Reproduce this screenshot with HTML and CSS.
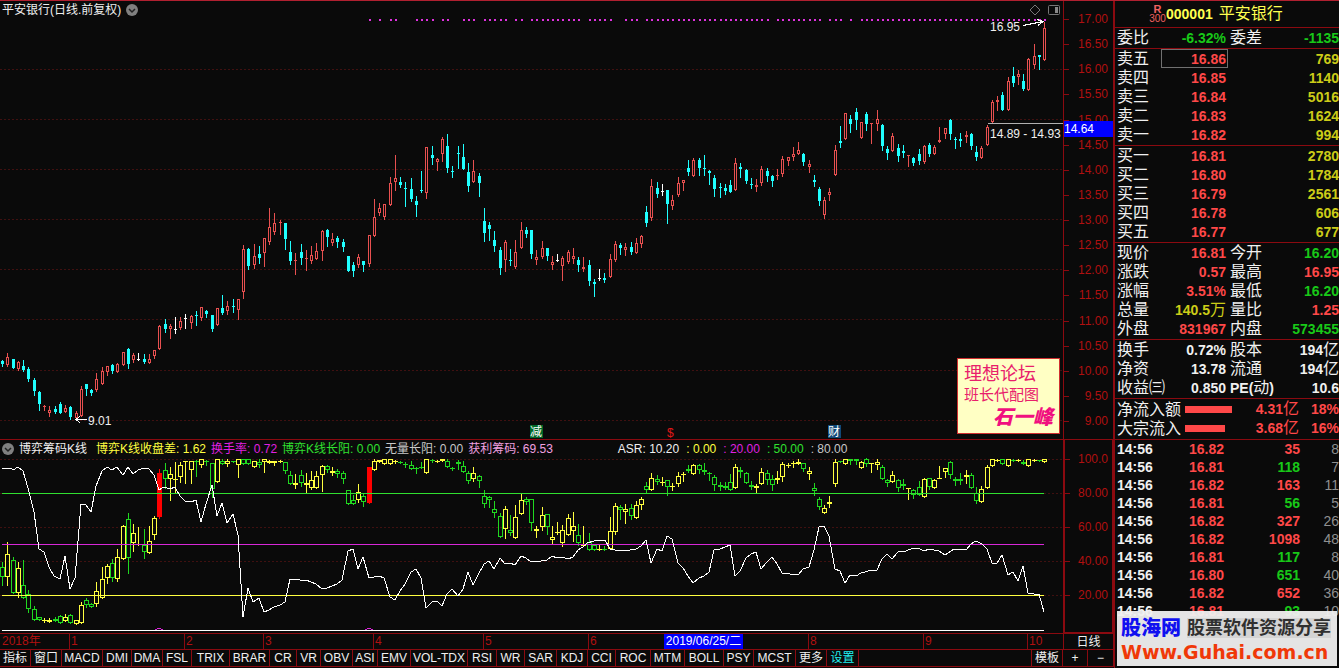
FILE: index.html
```html
<!DOCTYPE html>
<html lang="zh-CN">
<head>
<meta charset="utf-8">
<title>平安银行 000001</title>
<link rel="stylesheet" href="styles.css">
</head>
<body>
<div class="screen">
  <main class="charts">
    <section class="pane price-pane">
      <header class="pane-head">
        <h1 class="pane-title">平安银行(日线.前复权)</h1>
        <button class="icon-btn" aria-label="展开"><svg width="12" height="12" viewBox="0 0 12 12"><circle cx="6" cy="6" r="6" fill="#808080"/><path d="M3 5l3 3 3-3" fill="none" stroke="#222" stroke-width="1.5"/></svg></button>
        <span class="spacer"></span>
        <button class="icon-btn" aria-label="标记"><svg width="12" height="12" viewBox="0 0 12 12"><path d="M6 1l5 5-5 5-5-5z" fill="none" stroke="#777"/></svg></button>
        <button class="icon-btn panel-btn" aria-label="侧栏"><svg width="12" height="12" viewBox="0 0 12 12"><rect x=".5" y="1.5" width="11" height="9" rx="1" fill="none" stroke="#777"/><rect x="7" y="3" width="3" height="6" fill="#888"/></svg></button>
      </header>
      <svg class="plot" id="price-plot" viewBox="0 19 1063 420" preserveAspectRatio="none" role="img" aria-label="日线K线图"></svg>
      <aside class="card">
        <p class="card-forum">理想论坛</p>
        <p class="card-by">班长代配图</p>
        <p class="card-sign">石一峰</p>
      </aside>
    </section>
    <div class="scale price-scale">
      <span>17.00</span><span>16.50</span><span>16.00</span><span>15.50</span><span>15.00</span><span>14.50</span><span>14.00</span><span>13.50</span><span>13.00</span><span>12.50</span><span>12.00</span><span>11.50</span><span>11.00</span><span>10.50</span><span>10.00</span><span>9.50</span><span>9.00</span>
      <b class="cursor-price">14.64</b>
    </div>

    <section class="pane">
      <header class="pane-head indicator-head">
        <button class="icon-btn" aria-label="指标菜单"><svg width="12" height="12" viewBox="0 0 12 12"><circle cx="6" cy="6" r="6" fill="#808080"/><path d="M3 5l3 3 3-3" fill="none" stroke="#222" stroke-width="1.5"/></svg></button>
        <h2 class="pane-title indicator-name">博弈筹码K线</h2>
        <span class="c-yellow">博弈K线收盘差: 1.62</span>
        <span class="c-magenta">换手率: 0.72</span>
        <span class="c-lime">博弈K线长阳: 0.00</span>
        <span class="c-silver">无量长阳: 0.00</span>
        <span class="c-pink">获利筹码: 69.53</span>
        <span class="asr">ASR: 10.20</span>
        <span class="asr-level c-yellow">: 0.00</span>
        <span class="asr-level c-magenta">: 20.00</span>
        <span class="asr-level c-lime">: 50.00</span>
        <span class="asr-level c-silver">: 80.00</span>
      </header>
      <svg class="plot" id="chip-plot" viewBox="0 457 1063 176" preserveAspectRatio="none" role="img" aria-label="博弈筹码K线"></svg>
    </section>
    <div class="scale chip-scale">
      <span>100.0</span><span>80.00</span><span>60.00</span><span>40.00</span><span>20.00</span>
    </div>

    <div class="dates">
      <span>2018年</span><span class="month">1</span><span class="month">2</span><span class="month">3</span><span class="month">4</span><span class="month">5</span><span class="month">6</span><span class="cursor-date">2019/06/25/二</span><span></span><span class="month">8</span><span class="month">9</span><span class="month">10</span>
    </div>
    <button class="period">日线</button>

    <nav class="tabs">
      <button>指标</button><button>窗口</button><button>MACD</button><button>DMI</button><button>DMA</button><button>FSL</button><button>TRIX</button><button>BRAR</button><button>CR</button><button>VR</button><button>OBV</button><button>ASI</button><button>EMV</button><button>VOL-TDX</button><button>RSI</button><button>WR</button><button>SAR</button><button>KDJ</button><button>CCI</button><button>ROC</button><button>MTM</button><button>BOLL</button><button>PSY</button><button>MCST</button><button>更多</button><button class="c-cyan">设置</button><i class="tab-gap"></i><button>模板</button><button>+</button><button>−</button>
    </nav>
  </main>

  <aside class="side">
    <header class="stock">
      <span class="badge"><b>R</b><small>300</small></span>
      <b>000001</b>
      <span class="stock-name">平安银行</span>
    </header>
    <table class="quote">
      <colgroup><col class="w-label"><col class="w-value"><col class="w-label2"><col></colgroup>
      <tbody>
        <tr><th>委比</th><td class="c-green">-6.32%</td><th>委差</th><td class="c-green">-1135</td></tr>
      </tbody>
      <tbody>
        <tr><th>卖五</th><td class="c-red picked">16.86</td><th></th><td class="c-gold">769</td></tr>
        <tr><th>卖四</th><td class="c-red">16.85</td><th></th><td class="c-gold">1140</td></tr>
        <tr><th>卖三</th><td class="c-red">16.84</td><th></th><td class="c-gold">5016</td></tr>
        <tr><th>卖二</th><td class="c-red">16.83</td><th></th><td class="c-gold">1624</td></tr>
        <tr><th>卖一</th><td class="c-red">16.82</td><th></th><td class="c-gold">994</td></tr>
      </tbody>
      <tbody>
        <tr><th>买一</th><td class="c-red">16.81</td><th></th><td class="c-gold">2780</td></tr>
        <tr><th>买二</th><td class="c-red">16.80</td><th></th><td class="c-gold">1784</td></tr>
        <tr><th>买三</th><td class="c-red">16.79</td><th></th><td class="c-gold">2561</td></tr>
        <tr><th>买四</th><td class="c-red">16.78</td><th></th><td class="c-gold">606</td></tr>
        <tr><th>买五</th><td class="c-red">16.77</td><th></th><td class="c-gold">677</td></tr>
      </tbody>
      <tbody>
        <tr><th>现价</th><td class="c-red">16.81</td><th>今开</th><td class="c-green">16.20</td></tr>
        <tr><th>涨跌</th><td class="c-red">0.57</td><th>最高</th><td class="c-red">16.95</td></tr>
        <tr><th>涨幅</th><td class="c-red">3.51%</td><th>最低</th><td class="c-green">16.20</td></tr>
        <tr><th>总量</th><td class="c-gold">140.5<span class="unit">万</span></td><th>量比</th><td class="c-red">1.25</td></tr>
        <tr><th>外盘</th><td class="c-red">831967</td><th>内盘</th><td class="c-green">573455</td></tr>
      </tbody>
      <tbody>
        <tr><th>换手</th><td>0.72%</td><th>股本</th><td>194<span class="unit">亿</span></td></tr>
        <tr><th>净资</th><td>13.78</td><th>流通</th><td>194<span class="unit">亿</span></td></tr>
        <tr><th>收益㈢</th><td>0.850</td><th><b>PE(</b>动<b>)</b></th><td>10.6</td></tr>
      </tbody>
    </table>
    <ul class="flows">
      <li><span class="flow-name">净流入额</span><span class="track"><i class="bar" style="width:87%"></i></span><b>4.31<span class="unit">亿</span></b><b class="share">18%</b></li>
      <li><span class="flow-name">大宗流入</span><span class="track"><i class="bar" style="width:74%"></i></span><b>3.68<span class="unit">亿</span></b><b class="share">16%</b></li>
    </ul>
    <div class="ticks-box">
      <table class="ticks">
        <colgroup><col class="w-time"><col class="w-price"><col class="w-vol"><col></colgroup>
        <tbody>
          <tr><th>14:56</th><td class="c-red">16.82</td><td class="c-red">35</td><td class="count">8</td></tr>
          <tr><th>14:56</th><td class="c-red">16.81</td><td class="c-green">118</td><td class="count">7</td></tr>
          <tr><th>14:56</th><td class="c-red">16.82</td><td class="c-red">163</td><td class="count">11</td></tr>
          <tr><th>14:56</th><td class="c-red">16.81</td><td class="c-green">56</td><td class="count">5</td></tr>
          <tr><th>14:56</th><td class="c-red">16.82</td><td class="c-red">327</td><td class="count">26</td></tr>
          <tr><th>14:56</th><td class="c-red">16.82</td><td class="c-red">1098</td><td class="count">48</td></tr>
          <tr><th>14:56</th><td class="c-red">16.81</td><td class="c-green">117</td><td class="count">8</td></tr>
          <tr><th>14:56</th><td class="c-red">16.80</td><td class="c-green">651</td><td class="count">40</td></tr>
          <tr><th>14:56</th><td class="c-red">16.82</td><td class="c-red">652</td><td class="count">36</td></tr>
          <tr><th>14:56</th><td class="c-red">16.81</td><td class="c-green">93</td><td class="count">10</td></tr>
        </tbody>
      </table>
    </div>
    <a class="site" href="#">
      <span class="site-top"><b class="site-name">股海网</b><span class="site-motto">股票软件资源分享</span></span>
      <b class="site-url">Www.Guhai.com.cn</b>
    </a>
  </aside>
</div>
<script src="chart.js"></script>
</body>
</html>
```

FILE: styles.css
```css
* { box-sizing: border-box; }

:root {
  --bg: #0a0a0a;
  --line: #8b0a10;
  --red: #ff4848;
  --green: #18c818;
  --gold: #cccc18;
}

body {
  margin: 0;
  background: var(--bg);
  color: #f0f0f0;
  font-family: "Liberation Sans", "Noto Sans CJK SC", sans-serif;
  font-size: 12px;
  line-height: 16px;
}

h1, h2, p, ul { margin: 0; padding: 0; }

button {
  margin: 0;
  padding: 0;
  border: 0;
  background: none;
  color: inherit;
  font: inherit;
  cursor: pointer;
}

.c-red { color: var(--red); }
.c-green { color: var(--green); }
.c-gold { color: var(--gold); }
.c-yellow { color: #ffff40; }
.c-magenta { color: #e020e0; }
.c-lime { color: #30e030; }
.c-silver { color: #c8c8c8; }
.c-pink { color: #f0a0e0; }
.c-cyan { color: #20f0f0; }

.screen {
  display: grid;
  grid-template-columns: minmax(0, 1fr) 225px;
  height: 100vh;
  min-height: 560px;
  border-top: 1px solid #b02030;
  overflow: hidden;
}

/* chart area */
.charts {
  display: grid;
  grid-template-columns: minmax(0, 1fr) 51px;
  grid-template-rows: minmax(0, 439fr) minmax(0, 194fr) 16px 17px;
  padding-bottom: 1px;
  min-height: 0;
}

.pane {
  position: relative;
  display: flex;
  flex-direction: column;
  min-height: 0;
  border-bottom: 1px solid var(--line);
}

.pane-head {
  display: flex;
  align-items: center;
  gap: 5px;
  height: 18px;
  padding: 0 3px 0 2px;
  white-space: nowrap;
}

.pane-title {
  font-size: 12px;
  font-weight: normal;
}

.indicator-head { height: 17px; }
.indicator-name { margin-right: 4px; }
.asr { margin-left: 60px; }
.asr-level { margin-left: 2px; }
.spacer { flex: 1; }
.panel-btn { margin-left: 2px; }

.icon-btn {
  display: block;
  width: 12px;
  height: 12px;
}

.icon-btn svg { display: block; }

.plot {
  display: block;
  flex: 1;
  width: 100%;
  min-height: 0;
  shape-rendering: crispEdges;
}

.plot text { font-size: 12px; }

.card {
  position: absolute;
  right: 3px;
  bottom: 5px;
  width: 103px;
  padding: 4px 6px;
  border: 1px solid #d03030;
  background: #ffffc4;
  color: #e8206c;
  white-space: nowrap;
}

.card-forum { font-size: 18px; line-height: 22px; }
.card-by { font-size: 15px; line-height: 20px; }

.card-sign {
  color: #f01080;
  font-size: 20px;
  font-style: italic;
  font-weight: 900;
  line-height: 24px;
  text-align: right;
}

/* value scales */
.scale {
  position: relative;
  display: flex;
  flex-direction: column;
  justify-content: space-between;
  border: solid var(--line);
  border-width: 0 1px 1px;
  color: #b01010;
  line-height: 12px;
  text-align: right;
}

.price-scale { padding: 12px 5px 12px 0; }

.chip-scale {
  padding: 13px 4px 31px 0;
  border-width: 0 2px 2px;
}

.scale span { position: relative; }

.scale span::before {
  content: "";
  position: absolute;
  left: 0;
  top: 6px;
  width: 5px;
  border-top: 1px solid var(--line);
}

.cursor-price {
  position: absolute;
  left: 0;
  right: 0;
  top: 27.5%;
  background: #0000ff;
  color: #fff;
  font-weight: normal;
  line-height: 16px;
  text-align: left;
}

/* date axis and tabs */
.dates {
  display: grid;
  grid-template-columns: 69fr 115fr 79fr 110fr 110fr 105fr 76fr 79fr 65fr 115fr 104fr 36fr;
  border-bottom: 1px solid var(--line);
  color: #b01010;
  line-height: 15px;
  white-space: nowrap;
}

.dates span:first-child { padding-left: 2px; }

.month {
  padding-left: 1px;
  border-left: 1px solid var(--line);
}

.cursor-date {
  background: #0000ff;
  color: #fff;
  text-align: center;
}

.period {
  border: solid var(--line);
  border-width: 0 1px 1px;
  line-height: 14px;
}

.tabs {
  grid-column: 1 / -1;
  display: grid;
  grid-template-columns: 31fr 31fr 41fr 29fr 31fr 29fr 38fr 40fr 27fr 24fr 32fr 25fr 33fr 57fr 29fr 28fr 32fr 31fr 28fr 35fr 34fr 39fr 30fr 42fr 31fr 32fr 173fr 31fr 25fr 26fr;
  border-bottom: 1px solid var(--line);
}

.tabs button,
.tab-gap {
  min-width: 0;
  border-right: 1px solid var(--line);
  line-height: 15px;
  white-space: nowrap;
}

/* quote side panel */
.side {
  position: relative;
  display: flex;
  flex-direction: column;
  min-height: 0;
  border-left: 1px solid var(--line);
  overflow: hidden;
  font-size: 14px;
}

.stock {
  display: flex;
  align-items: center;
  flex: none;
  height: 27px;
  padding-left: 34px;
  border-bottom: 1px solid var(--line);
  color: #ffff50;
}

.badge {
  display: flex;
  flex-direction: column;
  align-items: center;
  width: 17px;
  color: #f06060;
  font-size: 11px;
  line-height: 10px;
}

.badge small { font-size: 10px; }

.stock-name {
  margin-left: 6px;
  font-size: 16px;
}

.quote,
.ticks {
  width: 100%;
  table-layout: fixed;
  border-collapse: separate;
  border-spacing: 0;
  font-weight: bold;
}

.w-label { width: 46px; }
.w-value { width: 67px; }
.w-label2 { width: 50px; }

.quote tr { height: 19px; }

.quote th,
.quote td {
  height: 19px;
  padding: 0;
  line-height: 18px;
  white-space: nowrap;
}

.quote th {
  padding-left: 2px;
  font-size: 16px;
  font-weight: normal;
  text-align: left;
}

.quote th b {
  font-size: 14px;
  line-height: 1;
}

.quote td { text-align: right; }
.quote td:nth-child(2) { padding-right: 2px; }

.quote tbody tr:last-child > * {
  height: 21px;
  padding-bottom: 1px;
  border-bottom: 1px solid var(--line);
}

.quote .picked {
  outline: 1px solid #707070;
  outline-offset: -1px;
}

.unit {
  font-size: 16px;
  font-weight: normal;
  line-height: 1;
}

.flows {
  flex: none;
  padding: 1px 0 1px 2px;
  border-bottom: 1px solid var(--line);
  list-style: none;
}

.flows li {
  display: grid;
  grid-template-columns: 64px 58px 60px 1fr;
  align-items: center;
  height: 19px;
  color: var(--red);
  line-height: 19px;
  text-align: right;
  white-space: nowrap;
}

.flow-name {
  color: #f0f0f0;
  font-size: 16px;
}

.track { padding-left: 4px; }

.bar {
  display: block;
  height: 7px;
  background: var(--red);
}

.ticks-box {
  flex: 1;
  min-height: 0;
  overflow: hidden;
}

.w-time { width: 46px; }
.w-price { width: 63px; }
.w-vol { width: 76px; }

.ticks th,
.ticks td {
  height: 18px;
  padding: 0;
  line-height: 18px;
  text-align: right;
}

.ticks th {
  padding-left: 2px;
  text-align: left;
}

.ticks .count {
  color: #909090;
  font-weight: normal;
}

.site {
  position: absolute;
  right: 2px;
  bottom: 2px;
  left: 2px;
  padding: 4px 4px 3px;
  background: rgba(240, 240, 240, 0.95);
  text-decoration: none;
  white-space: nowrap;
}

.site-top {
  display: flex;
  align-items: center;
  gap: 6px;
}

.site-name {
  color: #1010f0;
  font-size: 20px;
  font-weight: 900;
  line-height: 26px;
}

.site-motto {
  background: #d4d4d4;
  color: #303030;
  font-size: 18px;
  font-weight: bold;
  line-height: 20px;
}

.site-url {
  display: block;
  color: #f03808;
  font-family: "DejaVu Sans", sans-serif;
  font-size: 19px;
  line-height: 22px;
}
```

FILE: chart.js
```js
// Each candle: kind, high, body top, body bottom, low (in plot units).
// Kinds: r rising, c falling, w flat; y/g hollow chips, R solid chip.
const price = `c 360 361 364 366,r 353 357 365 366,c 359 359 368 368,r 361 362 369 370,c 360 366 370 371,c 367 369 379 381,c 378 380 391 395,c 391 392 404 410,r 405 406 407 410,r 406 410 413 416,
c 406 409 412 413,c 402 404 413 413,r 405 408 412 412,c 406 407 417 419,r 411 413 418 418,r 386 389 416 416,c 384 384 389 395,c 389 390 393 395,r 373 379 390 391,r 367 371 384 384,
r 366 366 372 375,c 364 365 371 373,r 363 364 372 372,r 352 352 365 365,c 348 349 364 368,r 353 355 360 362,w 353 359 359 360,c 354 359 362 363,r 354 359 363 363,r 350 350 356 358,
r 325 326 349 349,c 319 324 329 332,r 324 326 329 338,w 317 329 329 333,r 317 321 328 329,w 314 318 318 328,r 315 316 323 328,c 311 315 316 325,r 307 307 318 320,c 310 311 314 317,
c 315 315 329 331,r 308 308 325 325,c 295 308 313 314,r 301 306 311 314,c 299 306 307 312,r 299 299 310 319,r 245 249 292 298,c 248 249 266 269,r 244 256 265 268,c 246 254 258 263,
r 238 238 253 266,r 208 227 242 244,r 213 223 232 234,r 220 222 223 234,c 223 223 239 249,c 241 252 261 264,r 253 260 261 274,c 244 252 258 264,r 250 258 259 270,r 246 255 261 263,
r 243 251 259 259,r 230 231 251 260,c 229 230 237 246,r 233 239 243 245,c 236 238 242 247,c 239 242 247 251,c 256 256 271 271,c 262 265 271 276,r 254 257 265 267,c 261 261 265 271,
r 235 235 264 266,r 199 217 236 236,r 203 208 213 215,r 204 204 217 219,r 177 183 205 205,r 155 178 182 190,c 177 182 185 187,c 182 188 189 206,c 178 189 199 201,c 196 201 205 216,
c 171 190 191 192,r 147 147 193 198,c 146 155 158 164,r 158 159 162 170,r 137 139 154 161,c 134 146 168 172,c 166 171 172 177,c 146 153 154 168,c 144 157 169 169,c 163 172 186 191,
r 160 171 182 182,c 173 176 183 196,c 208 221 233 241,c 222 225 229 240,c 231 240 246 251,c 247 250 268 274,r 240 242 260 271,c 249 260 261 265,r 240 252 267 268,r 222 230 248 248,
c 227 230 234 237,c 230 230 254 258,r 250 257 260 264,r 241 248 257 258,c 248 248 256 260,r 256 262 265 269,w 254 260 260 261,r 256 258 266 280,r 250 252 262 263,r 248 256 259 263,
c 257 260 265 271,r 257 267 269 271,c 260 265 281 285,c 279 282 284 296,w 269 278 278 280,c 273 278 280 282,r 254 259 277 277,r 241 244 260 261,c 243 245 248 254,r 243 247 250 255,
c 242 247 252 254,r 238 243 253 253,r 235 236 244 247,c 206 212 223 226,r 179 186 218 220,c 182 188 194 197,w 184 191 191 195,c 190 190 204 223,r 195 200 206 209,r 177 183 195 196,
r 180 180 183 190,c 160 168 172 175,r 158 160 176 176,c 158 160 168 175,c 155 168 169 175,c 170 171 173 184,c 175 178 189 196,c 183 187 188 197,c 184 188 191 194,c 180 185 192 192,
r 158 163 190 190,c 163 167 169 177,c 169 170 181 183,c 178 184 185 188,r 179 185 187 191,r 166 169 183 185,c 168 171 176 181,c 175 176 181 186,r 169 175 176 179,r 156 159 174 176,
r 157 157 161 165,r 147 154 157 160,r 142 150 154 154,c 153 154 162 165,r 160 164 167 172,c 175 180 182 186,c 187 189 201 205,r 197 200 215 218,r 188 192 195 200,r 145 150 175 175,
c 126 141 143 147,r 113 113 139 139,c 115 119 124 132,c 108 112 120 129,r 122 122 138 138,c 112 114 124 130,r 123 123 123 143,r 110 119 124 130,c 124 125 146 150,c 146 149 153 159,
r 133 136 151 151,c 144 148 156 161,c 145 151 153 157,r 155 155 155 166,c 157 158 163 165,c 149 154 161 164,r 145 146 162 163,c 143 145 154 156,r 145 147 154 154,r 127 140 142 142,
r 128 128 134 138,c 119 120 134 139,c 137 139 140 148,c 133 139 141 146,r 131 135 137 142,c 133 134 146 149,c 146 152 157 160,r 146 148 158 158,r 125 127 145 145,r 100 102 122 122,
r 96 100 102 110,c 92 95 110 110,r 77 81 110 110,c 67 76 83 86,r 70 74 77 84,c 74 81 89 90,r 58 59 90 90,r 44 56 65 68,c 55 55 57 69,r 22 28 60 60`;

const chips = `g 562 567 577 585,y 542 554 577 585,g 557 560 593 593,y 562 568 593 597,g 560 585 598 598,g 590 594 609 612,g 606 609 620 620,g 617 617 620 620,y 618 620 620 622,y 618 620 622 622,
g 617 619 621 621,g 615 616 623 623,y 614 617 621 621,g 614 615 623 623,y 620 620 624 624,y 602 605 623 623,g 598 600 605 607,g 603 604 607 607,y 582 591 604 606,y 567 579 598 598,
y 564 566 578 583,g 559 563 578 581,y 549 557 579 581,y 525 526 559 559,g 513 519 558 573,y 524 533 543 551,y 527 544 544 545,g 529 545 552 558,y 526 541 553 553,y 516 518 535 539,
R 469 473 517 518,g 463 470 479 488,y 467 474 479 500,y 462 479 480 492,y 462 465 477 482,y 461 461 461 483,y 461 461 470 483,g 460 461 462 476,y 459 459 465 467,g 460 461 462 465,
g 463 463 489 497,y 459 459 482 482,g 459 461 464 464,y 459 461 464 466,g 461 461 462 462,y 459 459 465 477,g 459 459 464 464,g 459 459 464 464,y 461 461 467 467,g 459 462 465 467,
y 459 459 462 472,y 460 461 463 463,y 461 461 463 465,y 460 461 461 462,g 462 462 471 473,g 471 475 484 484,y 474 483 485 488,g 470 475 483 486,y 473 483 485 492,y 471 480 488 489,
y 471 476 488 488,y 465 466 475 491,g 465 466 470 472,y 467 471 473 475,g 469 471 474 477,g 471 473 479 483,g 490 490 504 504,g 495 500 504 504,y 484 492 500 502,g 493 496 502 506,
R 467 467 503 503,y 459 461 470 470,y 460 460 462 462,y 459 459 464 464,y 459 459 464 464,y 460 461 461 463,g 461 462 462 463,g 462 464 464 467,g 461 465 469 469,g 467 468 469 473,
g 462 467 468 468,y 459 459 473 473,g 459 460 461 462,y 460 461 461 462,y 459 459 461 461,g 459 461 467 467,g 467 468 469 470,g 460 462 464 469,g 461 466 472 472,g 471 473 481 483,
y 467 473 479 481,g 475 476 481 487,g 490 496 504 507,g 496 497 500 507,g 501 509 513 517,g 513 516 537 537,y 506 509 529 538,g 515 530 533 535,y 505 517 538 538,y 494 500 514 514,
g 497 499 502 504,g 499 499 523 530,y 526 529 531 537,y 507 515 527 530,g 514 514 527 534,y 526 537 540 543,y 522 532 532 534,y 525 530 543 546,y 514 518 535 535,y 512 526 531 541,
g 524 535 543 545,y 526 545 546 546,g 533 542 550 550,g 545 545 550 550,y 545 549 550 550,g 546 549 550 550,y 517 531 549 549,y 503 506 532 534,g 505 507 510 519,y 504 509 512 523,
g 504 508 516 519,y 501 505 518 518,y 497 499 505 509,g 482 486 490 493,y 473 478 490 490,g 475 479 482 484,y 477 482 482 485,g 480 480 487 495,y 483 486 487 490,y 472 476 484 486,
y 472 474 475 481,g 465 469 471 472,y 464 465 474 474,g 464 465 470 473,g 463 470 472 474,g 472 473 474 480,g 475 477 485 490,g 482 485 487 490,g 482 486 488 489,g 474 482 490 490,
y 464 467 488 488,g 467 470 472 477,g 472 473 483 483,g 481 485 487 489,y 484 486 488 492,y 468 472 484 484,g 470 473 480 484,g 475 479 485 490,y 471 478 480 483,y 462 464 477 481,
y 463 465 466 467,y 461 463 464 467,y 459 462 464 464,g 463 463 469 471,y 467 471 474 479,g 483 488 491 495,g 497 499 507 509,y 505 508 513 513,y 496 502 504 507,y 459 462 484 486,
g 461 461 462 462,y 459 459 464 464,g 459 459 461 464,g 459 459 461 464,y 461 462 468 468,g 458 459 464 466,y 463 463 463 472,y 459 462 465 469,g 465 467 479 479,g 479 480 483 486,
y 471 475 482 482,g 479 480 488 491,g 479 484 486 489,y 488 488 488 499,g 489 490 495 498,g 481 487 495 495,y 478 479 497 497,g 478 478 487 489,y 479 480 488 488,y 466 478 478 478,
y 468 468 472 477,g 461 462 475 478,g 477 479 481 485,g 473 479 481 484,y 470 475 477 483,g 473 475 488 488,g 487 493 501 503,y 486 489 502 502,y 465 467 488 488,y 459 459 466 466,
y 459 460 461 461,g 459 459 464 464,y 459 459 466 466,g 459 460 460 461,y 459 460 460 461,g 460 462 464 464,y 459 459 466 466,y 459 460 460 461,g 460 460 460 461,y 459 459 462 462`;

const turnover = '2,468 11,468 13,470 18,467 23,471 28,488 34,512 39,549 44,552 49,567 54,576 60,579 65,556 70,589 75,578 81,504 86,505 91,512 96,486 102,471 107,467 112,470 117,467 123,475 128,467 133,474 138,470 144,468 149,469 154,475 159,490 164,487 170,489 175,487 180,496 185,501 191,502 196,500 201,522 206,504 212,485 217,516 222,503 227,523 233,514 238,535 243,617 248,588 253,602 259,598 264,612 269,610 274,607 280,605 285,602 290,579 300,580 306,580 311,582 316,584 322,589 327,588 332,586 337,584 342,580 348,551 353,549 358,569 363,557 369,578 379,576 384,578 390,597 395,600 400,591 405,584 411,572 416,569 421,578 426,608 432,602 437,601 442,606 447,594 452,589 458,596 463,589 468,572 473,585 478,575 484,564 489,561 494,569 500,558 505,564 510,563 515,565 521,556 526,558 531,562 541,561 547,560 552,556 557,558 562,557 568,559 573,557 578,550 583,547 587,543 594,541 605,540 610,549 620,551 630,550 636,549 641,546 646,540 651,563 657,549 662,551 667,536 672,539 678,563 683,568 688,576 693,583 699,578 704,576 709,572 714,550 720,549 730,545 735,576 740,571 746,558 751,554 756,552 761,569 767,562 772,557 777,564 782,573 798,575 803,569 809,567 814,550 819,527 824,526 829,536 835,569 840,571 845,583 850,575 856,576 861,573 872,570 877,570 882,559 887,554 892,559 898,552 906,551 913,548 918,548 924,551 929,549 939,551 945,555 954,549 962,549 966,550 971,544 976,541 982,544 987,549 992,563 997,563 1002,555 1008,575 1013,572 1018,581 1023,566 1028,593 1034,594 1039,594 1044,612';

const COLORS = { r: '#e85050', c: '#20ffff', w: '#ffffff', y: '#ffff40', g: '#20d820', R: '#ff0000' };
const xAt = i => Math.round(2.2 + 5.236 * i);

function candles(text, half) {
  const outline = {}, solid = {};
  text.split(',').forEach((item, i) => {
    const [kind, ...v] = item.trim().split(' ');
    const [high, top, bottom, low] = v.map(Number);
    const x = xAt(i), c = x + 0.5;
    outline[kind] = outline[kind] || '';
    solid[kind] = solid[kind] || '';
    if (kind === 'c' || kind === 'R') {
      solid[kind] += `M${x - half} ${top}h${half * 2 + 1}V${bottom}h${-half * 2 - 1}z`;
      outline[kind] += `M${c} ${high}V${low + 1}`;
    } else if (bottom - top < 2) {
      outline[kind] += `M${x - half} ${top + 0.5}h${half * 2 + 1}M${c} ${high}V${low + 1}`;
    } else {
      outline[kind] += `M${c - half} ${top + 0.5}h${half * 2}V${bottom - 0.5}h${-half * 2}z`;
      outline[kind] += `M${c} ${high}V${top}M${c} ${bottom}V${low + 1}`;
    }
  });
  return Object.keys(outline).map(k =>
    `<path d="${outline[k]}" fill="none" stroke="${COLORS[k]}"/><path d="${solid[k]}" fill="${COLORS[k]}"/>`).join('');
}

const level = (y, x2, color, dash) =>
  `<path d="M${dash ? 0 : 2} ${y + 0.5}H${x2}" stroke="${color}"${dash ? ` stroke-dasharray="${dash}"` : ''}/>`;

const flagged = [70, 72, 74, 75, 79, 80, 81, 82, 84, 85, 88, 89, 90, 92, 93, 94, 95, 96, 98, 99];
for (let i = 101; i < 200; i++) if (![111, 117, 118, 122, 147, 157, 161, 163].includes(i)) flagged.push(i);

document.getElementById('price-plot').innerHTML =
  [69, 119, 169, 219, 269, 319, 370, 420].map(y => level(y, 1063, '#401010', '2 2')).join('') +
  candles(price, 1) +
  `<path d="${flagged.map(i => `M${xAt(i)} 20h2`).join('')}" stroke="#e030e0" stroke-width="2"/>
  <path d="M988 123.5H1063" stroke="#b0b0b0"/>
  <path d="M1023 25.500L1043 21.500M1037 19.500L1043 21.500L1038 25.500" fill="none" stroke="#fff"/>
  <path d="M87 419.500H76M80 416L76 419.500L80 423" fill="none" stroke="#fff"/>
  <g fill="#f0f0f0"><text x="990" y="31">16.95</text><text x="990" y="138">14.89 - 14.93</text><text x="88" y="425">9.01</text></g>
  <rect x="530" y="425" width="13" height="13" fill="#006828"/><rect x="828" y="425" width="13" height="13" fill="#104878"/>
  <g fill="#fff"><text x="530" y="436">减</text><text x="828" y="436">财</text></g>
  <text x="667" y="437" fill="#e01818">$</text>`;

document.getElementById('chip-plot').innerHTML =
  [459, 527, 561].map(y => level(y, 1063, '#401010', '2 2')).join('') +
  [493, 595].map(y => level(y, 1063, '#401010', '2 2')).join('') +
  candles(chips, 2) +
  level(493, 1044, '#30e030') + level(544, 1044, '#d828d8') + level(595, 1044, '#ffff40') + level(630, 1044, '#ffffff') +
  `<path d="M155 630q4-3 8 0M365 630q4-3 8 0" fill="none" stroke="#d828d8"/>
  <polyline points="${turnover}" fill="none" stroke="#fff"/>`;
```
